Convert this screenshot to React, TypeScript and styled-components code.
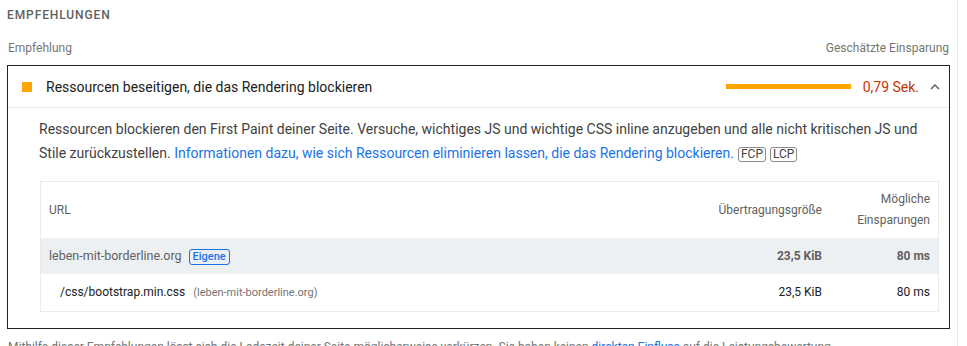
import { FC } from 'react';
import styled, { createGlobalStyle } from 'styled-components';

const GlobalStyle = createGlobalStyle`
  body {
    margin: 0;
    background: #fff;
    font-family: Roboto, "Liberation Sans", Arial, sans-serif;
    -webkit-font-smoothing: antialiased;
  }
`;

const Page = styled.div`
  width: 958px;
  height: 346px;
  overflow: hidden;
  box-sizing: border-box;
  padding: 0 7px 0 7px;
  border-right: 1px solid #e6e6e6;
`;

const GroupTitle = styled.div`
  padding-top: 7px;
  font-size: 12px;
  line-height: 16px;
  font-weight: 500;
  letter-spacing: 0.9px;
  text-transform: uppercase;
  color: #616161;
`;

const ColumnHeader = styled.div`
  display: flex;
  justify-content: space-between;
  margin-top: 17px;
  padding: 0 1px 0 1px;
  font-size: 12px;
  line-height: 16px;
  color: #757575;
`;

const AuditBox = styled.div`
  margin-top: 9px;
  border: 1px solid #202124;
`;

const AuditHeader = styled.div`
  display: flex;
  align-items: center;
  height: 41px;
  padding: 0 8px 0 14px;
  border-bottom: 1px solid #ebebeb;
`;

const Marker = styled.span<{ $color: string }>`
  width: 10px;
  height: 10px;
  margin-right: 14px;
  background: ${(p) => p.$color};
`;

const AuditTitle = styled.span`
  flex: 1;
  font-size: 14px;
  color: #212121;
`;

const SavingsBar = styled.span<{ $color: string }>`
  width: 125px;
  height: 5px;
  margin-right: 12px;
  background: ${(p) => p.$color};
`;

const SavingsValue = styled.span<{ $color: string }>`
  font-size: 14px;
  color: ${(p) => p.$color};
  margin-right: 10px;
`;

const Chevron = styled.svg`
  width: 12px;
  height: 12px;
`;

const AuditBody = styled.div`
  padding: 9px 10px 16px 31px;
`;

const Description = styled.p`
  margin: 0;
  font-size: 14px;
  line-height: 24px;
  color: #424242;
`;

const Link = styled.a`
  color: #1a73e8;
  text-decoration: none;
`;

const MetricTag = styled.span`
  display: inline-block;
  margin-left: 4px;
  padding: 0 2px;
  font-size: 12px;
  line-height: 13px;
  color: #424242;
  border: 1px solid #8a8a8a;
  border-radius: 3px;
`;

const Table = styled.div`
  margin: 16px 0 0 1px;
  border: 1px solid #ebebeb;
`;

const Row = styled.div<{ $variant?: 'head' | 'group' | 'item' }>`
  display: grid;
  grid-template-columns: 1fr 120px 108px;
  align-items: center;
  font-size: 12px;
  color: ${(p) => (p.$variant === 'item' ? '#212121' : '#616161')};
  font-weight: ${(p) => (p.$variant === 'group' ? 700 : 400)};
  background: ${(p) => (p.$variant === 'group' ? '#edf0f3' : '#fff')};
  height: ${(p) => (p.$variant === 'head' ? '56px' : p.$variant === 'group' ? '36px' : '37px')};
  line-height: 21px;
`;

const Cell = styled.div<{ $right?: boolean; $indent?: boolean }>`
  padding: 0 8px 0 ${(p) => (p.$indent ? '19px' : '8px')};
  text-align: ${(p) => (p.$right ? 'right' : 'left')};
  white-space: nowrap;
`;

const WrapCell = styled(Cell)`
  white-space: normal;
`;

const Origin = styled.span`
  font-weight: 400;
  font-size: 12.5px;
  color: #616161;
`;

const Badge = styled.span`
  display: inline-block;
  margin-left: 7px;
  padding: 0 3px;
  font-size: 11px;
  line-height: 14px;
  font-weight: 500;
  color: #1a73e8;
  border: 1px solid #1a73e8;
  border-radius: 3px;
`;

const SubOrigin = styled.span`
  margin-left: 8px;
  font-size: 11px;
  color: #757575;
`;

const Footnote = styled.p`
  margin: 8px 0 0 1px;
  font-size: 12px;
  line-height: 20px;
  color: #757575;
  white-space: nowrap;
`;

interface ResourceRow {
  url: string;
  host: string;
  size: string;
  savings: string;
}

const rows: ResourceRow[] = [
  { url: '/css/bootstrap.min.css', host: 'leben-mit-borderline.org', size: '23,5 KiB', savings: '80 ms' },
];

const App: FC = () => {
  return (
    <>
      <GlobalStyle />
      <Page>
        <GroupTitle>Empfehlungen</GroupTitle>
        <ColumnHeader>
          <span>Empfehlung</span>
          <span>Geschätzte Einsparung</span>
        </ColumnHeader>
        <AuditBox>
          <AuditHeader>
            <Marker $color="#ffa400" />
            <AuditTitle>Ressourcen beseitigen, die das Rendering blockieren</AuditTitle>
            <SavingsBar $color="#ffa400" />
            <SavingsValue $color="#c33300">0,79 Sek.</SavingsValue>
            <Chevron viewBox="0 0 12 12">
              <polyline points="2,8 6,4 10,8" fill="none" stroke="#616161" strokeWidth="1.5" />
            </Chevron>
          </AuditHeader>
          <AuditBody>
            <Description>
              Ressourcen blockieren den First Paint deiner Seite. Versuche, wichtiges JS und wichtige CSS
              inline anzugeben und alle nicht kritischen JS und Stile zurückzustellen.{' '}
              <Link href="#">
                Informationen dazu, wie sich Ressourcen eliminieren lassen, die das Rendering blockieren.
              </Link>
              <MetricTag>FCP</MetricTag>
              <MetricTag>LCP</MetricTag>
            </Description>
            <Table>
              <Row $variant="head">
                <Cell>URL</Cell>
                <Cell $right>Übertragungsgröße</Cell>
                <WrapCell $right>Mögliche Einsparungen</WrapCell>
              </Row>
              <Row $variant="group">
                <Cell>
                  <Origin>leben-mit-borderline.org</Origin>
                  <Badge>Eigene</Badge>
                </Cell>
                <Cell $right>23,5 KiB</Cell>
                <Cell $right>80 ms</Cell>
              </Row>
              {rows.map((row, i) => (
                <Row $variant="item" key={i}>
                  <Cell $indent>
                    {row.url}
                    <SubOrigin>({row.host})</SubOrigin>
                  </Cell>
                  <Cell $right>{row.size}</Cell>
                  <Cell $right>{row.savings}</Cell>
                </Row>
              ))}
            </Table>
          </AuditBody>
        </AuditBox>
        <Footnote>
          Mithilfe dieser Empfehlungen lässt sich die Ladezeit deiner Seite möglicherweise verkürzen. Sie
          haben keinen <Link href="#">direkten Einfluss</Link> auf die Leistungsbewertung.
        </Footnote>
      </Page>
    </>
  );
};

export default App;
